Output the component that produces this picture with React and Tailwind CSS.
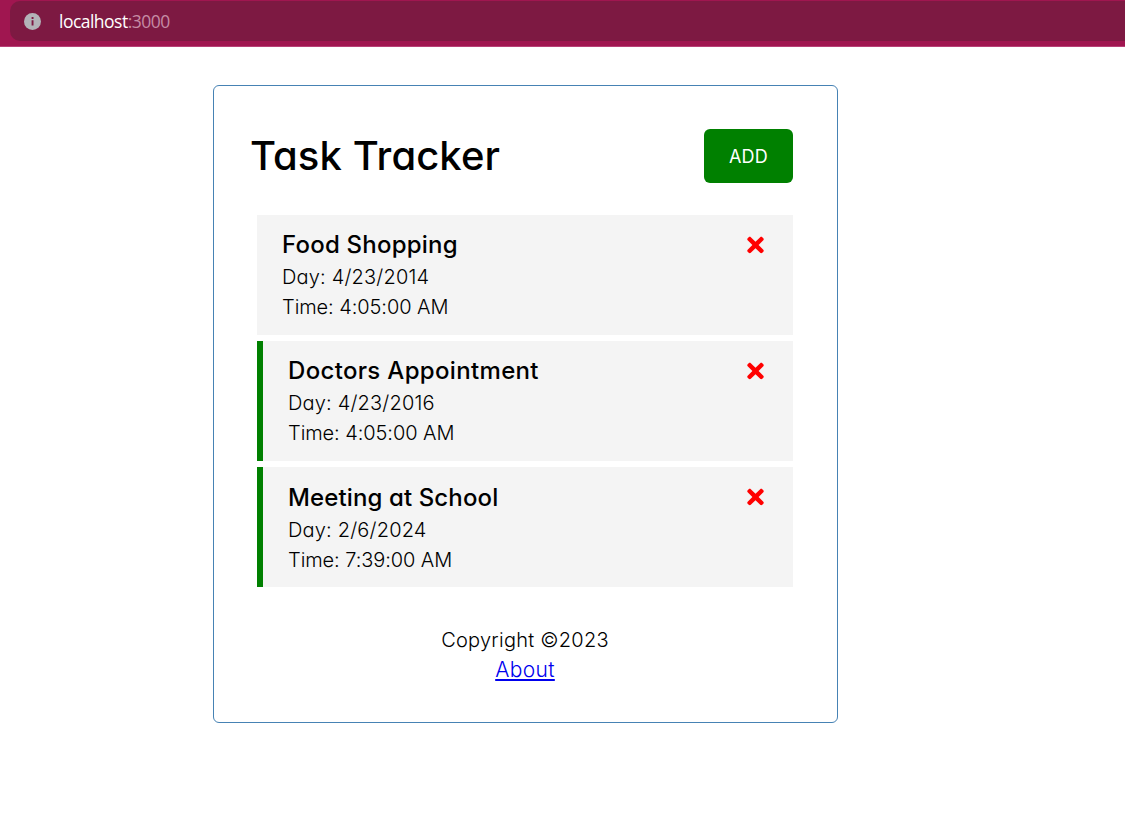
import { FaTimes } from "react-icons/fa";

const tasks = [
  {
    title: "Food Shopping", day: "4/23/2014", time: "4:05:00 AM",
    box: "pt-3", titleSpacing: "tracking-[0.22px]", icon: "",
  },
  {
    title: "Doctors Appointment", day: "4/23/2016", time: "4:05:00 AM",
    box: "border-l-[6px] border-[#008000] pt-3", titleSpacing: "tracking-[0.33px]", icon: "",
  },
  {
    title: "Meeting at School", day: "2/6/2024", time: "7:39:00 AM",
    box: "border-l-[6px] border-[#008000] pt-[13px]", titleSpacing: "tracking-[0.12px]", icon: "mb-0.5",
  },
];

function AddressBar() {
  return (
    <div className="h-[47px] border-b border-[#b84077] bg-[#a01650] pl-[10px] pt-px">
      <div className="flex h-10 items-center rounded-l-[10px] bg-[#7d1942] pl-[14px]">
        <svg className="size-[17px]" viewBox="0 0 17 17">
          <circle cx="8.5" cy="8.5" r="8.5" fill="#b3b3b8" />
          <path d="M7.6 4h1.9v1.9H7.6zM7.6 7.2h1.9v5.4H7.6z" fill="#7d1942" />
        </svg>
        <div className="ml-[18px] font-['Open_Sans','Noto_Sans',sans-serif] text-[17.5px] font-normal leading-6 tracking-[-0.52px] text-[#c58ba4]">
          <span className="text-white">localhost</span>:3000
        </div>
      </div>
    </div>
  );
}

function Task({ task }) {
  return (
    <div className={"h-[120px] bg-[#f4f4f4] pl-[25px] pr-[29px] " + task.box}>
      <h3 className="flex h-[35px] items-center justify-between text-[24px] font-medium">
        <span className={task.titleSpacing}>{task.title}</span>
        <FaTimes className={"h-6 w-[17px] text-[#ff0000] " + task.icon} />
      </h3>
      <p className="tracking-[0.18px]">Day: {task.day}</p>
      <p className="tracking-[-0.08px]">Time: {task.time}</p>
    </div>
  );
}

export default function App() {
  return (
    <div className="min-h-[815px] bg-white font-['Inter','Noto_Sans',sans-serif] text-xl font-light leading-[30px] text-black [font-feature-settings:'cv11']">
      <AddressBar />
      <main className="ml-[213px] mt-[38px] h-[638px] w-[625px] rounded-md border border-[#4682b4] pl-9 pr-11 pt-[43px]">
        <header className="flex h-[54px] items-center justify-between">
          <h1 className="text-[40px] font-medium tracking-[0.08px]">Task Tracker</h1>
          <button className="h-[54px] w-[89px] rounded-md bg-[#008000] pt-0.5 text-lg font-normal tracking-[0.2px] text-white">ADD</button>
        </header>
        <section className="ml-[7px] mt-8 flex flex-col gap-1.5">
          {tasks.map((task) => (
            <Task key={task.title} task={task} />
          ))}
        </section>
        <footer className="ml-[7px] mt-[38px] text-center">
          <p className="tracking-[0.25px]">Copyright ©2023</p>
          <a className="text-[21px] tracking-[0.35px] text-[#0000ee] underline decoration-2 underline-offset-2">About</a>
        </footer>
      </main>
    </div>
  );
}
